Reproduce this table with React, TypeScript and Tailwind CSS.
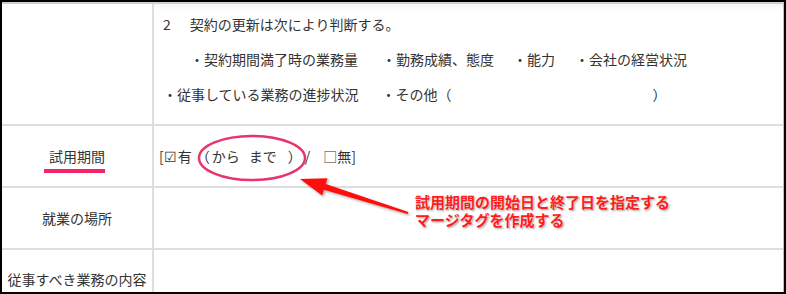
const jp = { fontFamily: '"Noto Sans CJK JP", "Noto Sans", sans-serif' };

function Row({ label, children, h }: { label?: string; children?: React.ReactNode; h: string }) {
  return (
    <div className={`flex shrink-0 ${h} border-b-2 border-[#dedede]`}>
      <div className="w-[152px] shrink-0 flex items-center justify-center border-r-2 border-[#dedede] text-[14px] text-[#333] whitespace-nowrap">
        {label}
      </div>
      <div className="flex-1 min-w-0">{children}</div>
    </div>
  );
}

export default function App() {
  return (
    <div className="bg-white" style={jp}>
      <div className="relative w-[786px] h-[294px] border-2 border-black overflow-hidden">
        <div className="h-full flex flex-col border-t-2 border-t-[#cfcfcf] border-r border-r-[#bdbdbd]">
          {/* 契約更新 */}
          <Row h="h-[122px]">
            <div className="pt-[3px] text-[14px] leading-[35px] text-[#333] whitespace-nowrap bg-gradient-to-b from-[#f6f6f6] via-white via-[6%] to-white">
              <div className="flex pl-[9px]">
                <span>2</span>
                <span className="ml-[19px]">契約の更新は次により判断する。</span>
              </div>
              <div className="flex pl-[36px]">
                <span>・契約期間満了時の業務量</span>
                <span className="ml-[24px]">・勤務成績、態度</span>
                <span className="ml-[19px]">・能力</span>
                <span className="ml-[20px]">・会社の経営状況</span>
              </div>
              <div className="flex pl-[9px]">
                <span>・従事している業務の進捗状況</span>
                <span className="ml-[23px]">・その他（</span>
                <span className="ml-[201px]">）</span>
              </div>
            </div>
          </Row>

          {/* 試用期間 */}
          <Row label="試用期間" h="h-[62px]">
            <div className="h-full flex items-center pl-[5px] text-[14px] text-[#333] whitespace-nowrap">
              <span>[</span>
              <span className="inline-block w-[14px] text-center">☑</span>
              <span>有</span>
              <span className="ml-[4px]">（</span>
              <span className="ml-[2px]">から</span>
              <span className="ml-[9px]">まで</span>
              <span className="ml-[11px]">）</span>
              <span className="ml-[3px]">/</span>
              <span className="ml-[13px]">□無]</span>
            </div>
          </Row>

          <Row label="就業の場所" h="h-[62px]" />

          <Row label="従事すべき業務の内容" h="h-[60px]" />
        </div>

        {/* 注釈 */}
        <div className="absolute left-[42px] top-[167px] w-[61px] h-[4px] bg-[#f0256a]" />
        <svg className="absolute left-0 top-0 pointer-events-none" width="786" height="294">
          <defs>
            <filter id="sh" x="-20%" y="-20%" width="140%" height="140%">
              <feDropShadow dx="1.5" dy="1.5" stdDeviation="1.2" floodColor="#000" floodOpacity="0.35" />
            </filter>
          </defs>
          <ellipse cx="250" cy="156" rx="53" ry="22" fill="none" stroke="#e8346e" strokeWidth="2.5" />
          <polygon
            points="298,177 325.5,176.2 323.7,181.9 406.3,210 405.7,212 321.9,187.7 320.1,193.4"
            fill="#ff1010"
            filter="url(#sh)"
          />
        </svg>
        <div className="absolute left-[413px] top-[191px] text-[15px] leading-[18px] font-bold text-[#ff1c1c] whitespace-nowrap [text-shadow:0_0_2px_#fff,1px_1px_2px_rgba(0,0,0,0.45)]">
          <div>試用期間の開始日と終了日を指定する</div>
          <div>マージタグを作成する</div>
        </div>
      </div>
    </div>
  );
}
